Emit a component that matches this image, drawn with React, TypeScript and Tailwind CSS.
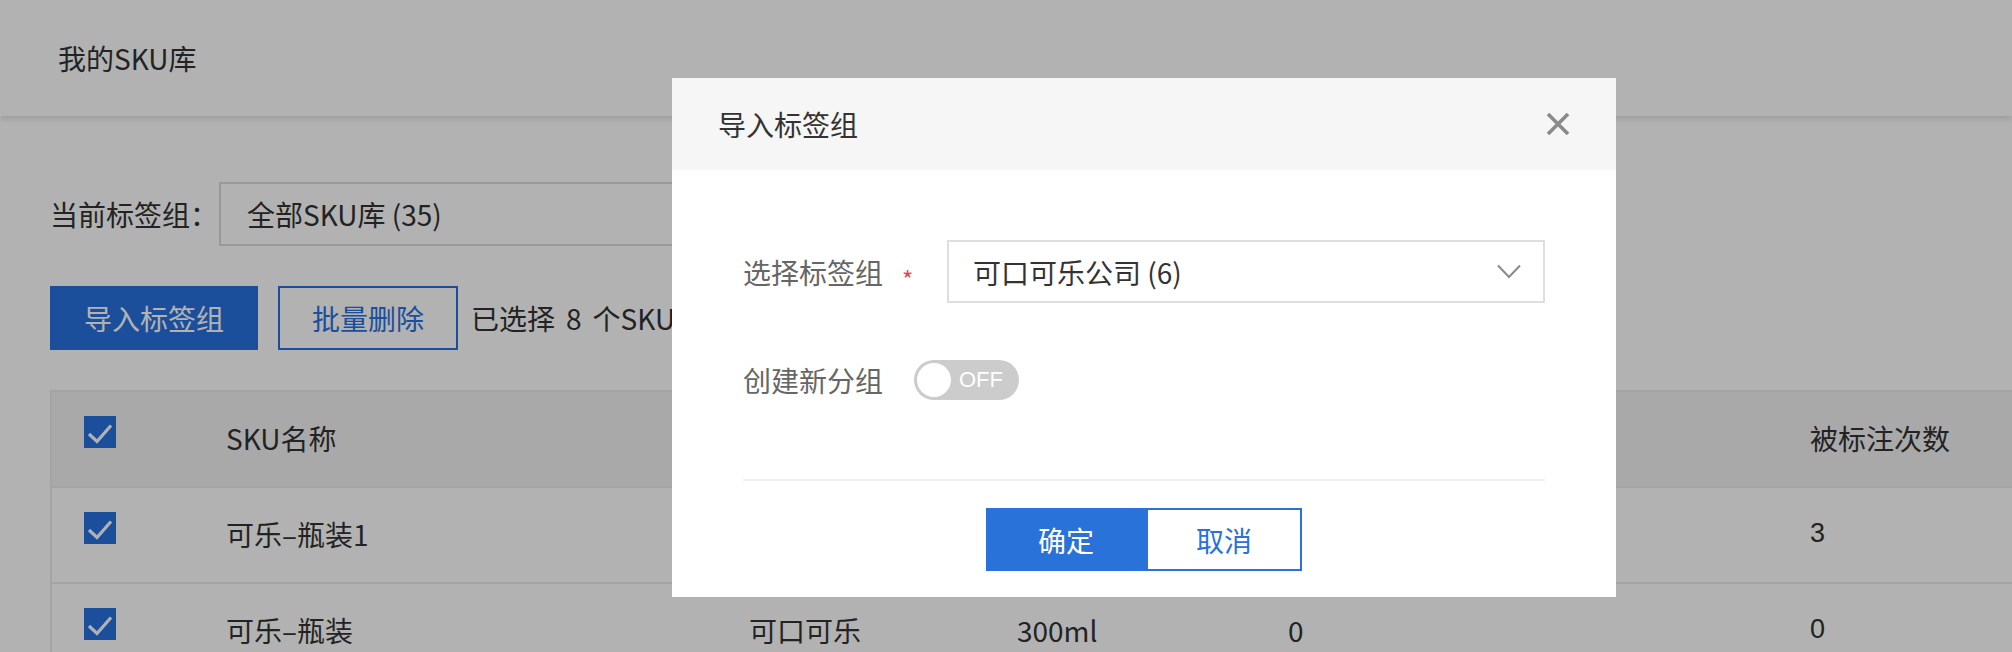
import React from 'react';

const ROWS = [
  { name: '可乐–瓶装1', brand: '可口可乐', spec: '', tagged: '1', count: '3' },
  { name: '可乐–瓶装', brand: '可口可乐', spec: '300ml', tagged: '0', count: '0' },
];

const GRID = 'grid grid-cols-[174px_523px_268px_271px_522px_1fr] items-center';

const Check = () => (
  <div className="w-[32px] h-[32px] bg-[#2871df] flex items-center justify-center">
    <svg width="32" height="32" viewBox="0 0 32 32" fill="none">
      <path d="M5 18 L13 25.5 L27 9.5" stroke="#fff" strokeWidth="3.2" />
    </svg>
  </div>
);

const ImportDialog = () => (
  <div className="absolute left-[672px] top-[78px] w-[944px] bg-white">
    <div className="h-[92px] bg-[#f6f6f6] flex items-center justify-between pl-[46px] pr-[46px]">
      <span className="text-[28px] text-[#333] leading-none">导入标签组</span>
      <svg width="24" height="24" viewBox="0 0 24 24" fill="none">
        <path d="M2 2 L22 22 M22 2 L2 22" stroke="#8a8a8a" strokeWidth="3.6" />
      </svg>
    </div>

    <div className="px-[71px] pt-[70px]">
      <div className="flex items-center h-[63px]">
        <div className="w-[204px] flex items-center">
          <span className="text-[28px] text-[#666] leading-none">选择标签组</span>
          <span className="ml-[19px] mt-[14px] text-[24px] text-[#e0474c] leading-none">*</span>
        </div>
        <div className="flex-1 h-[63px] border-2 border-[#dedede] flex items-center justify-between pl-[24px] pr-[22px]">
          <span className="text-[28px] text-[#333] leading-none">可口可乐公司 (6)</span>
          <svg width="24" height="15" viewBox="0 0 24 15" fill="none">
            <path d="M1 1.5 L12 13 L23 1.5" stroke="#8a8a8a" strokeWidth="2" />
          </svg>
        </div>
      </div>

      <div className="flex items-center mt-[57px] h-[40px]">
        <span className="w-[171px] text-[28px] text-[#666] leading-none">创建新分组</span>
        <div className="w-[105px] h-[40px] rounded-full bg-[#cccccc] flex items-center pl-[3px]">
          <div className="w-[34px] h-[34px] rounded-full bg-white" />
          <span className="ml-[8px] text-[22px] text-white leading-none font-['Liberation_Sans',sans-serif]">OFF</span>
        </div>
      </div>

      <div className="mt-[79px] h-[2px] bg-[#eef0f4]" />

      <div className="flex justify-center pt-[27px] pb-[26px]">
        <button className="w-[160px] h-[63px] bg-[#2872d9] text-white text-[28px] leading-none">确定</button>
        <button className="w-[156px] h-[63px] border-2 border-[#2872d9] bg-white text-[#2872d9] text-[28px] leading-none">取消</button>
      </div>
    </div>
  </div>
);

export default function App() {
  return (
    <div className="relative w-[2012px] h-[652px] overflow-hidden bg-white text-[#333] font-['Noto_Sans_CJK_SC',sans-serif]">
      <header className="h-[116px] bg-white shadow-[0_3px_6px_rgba(0,0,0,0.12)] flex items-center pl-[58px] relative z-10">
        <span className="text-[28px] leading-none">我的SKU库</span>
      </header>

      <main className="pl-[50px]">
        <div className="mt-[66px] flex items-center">
          <span className="w-[169px] text-[28px] leading-none">当前标签组：</span>
          <div className="w-[560px] h-[64px] border-2 border-[#dcdcdc] flex items-center pl-[26px]">
            <span className="text-[28px] leading-none">全部SKU库 (35)</span>
          </div>
        </div>

        <div className="mt-[40px] flex items-center h-[64px]">
          <button className="w-[208px] h-[64px] bg-[#2871df] text-white text-[28px] leading-none">导入标签组</button>
          <button className="ml-[20px] w-[180px] h-[64px] border-2 border-[#2871df] text-[#2871df] text-[28px] leading-none">批量删除</button>
          <span className="ml-[13px] text-[28px] leading-none">
            已选择<span className="px-[11px]">8</span>个SKU
          </span>
        </div>

        <div className="mt-[40px] w-[2100px] border-l-2 border-t-2 border-[#ebebeb]">
          <div className={`${GRID} h-[94px] pb-[3px] bg-[#f3f3f3] text-[28px] leading-none`}>
            <div className="pl-[32px] mb-[11px]"><Check /></div>
            <span>SKU名称</span>
            <span>品牌</span>
            <span>规格</span>
            <span>标注数</span>
            <span>被标注次数</span>
          </div>
          {ROWS.map((r) => (
            <div key={r.name} className={`${GRID} h-[96px] pb-[3px] border-t-2 border-[#ebebeb] text-[28px] leading-none`}>
              <div className="pl-[32px] mb-[11px]"><Check /></div>
              <span>{r.name}</span>
              <span>{r.brand}</span>
              <span>{r.spec}</span>
              <span>{r.tagged}</span>
              <span className="font-['Liberation_Sans',sans-serif] text-[27px]">{r.count}</span>
            </div>
          ))}
        </div>
      </main>

      <div className="absolute inset-0 z-20 bg-black/30" />
      <div className="absolute inset-0 z-30">
        <ImportDialog />
      </div>
    </div>
  );
}
